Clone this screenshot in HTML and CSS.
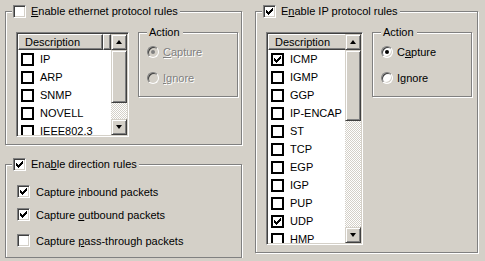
FILE: index.html
```html
<!DOCTYPE html>
<html lang="en">
<head>
    <meta charset="UTF-8">
    <title>Capture rules</title>
    <link rel="stylesheet" href="styles.css">
</head>
<body>
    <div class="dialog">
        <div class="left-col">
            <fieldset class="group group-eth">
                <legend><span class="chk"></span><span><u>E</u>nable ethernet protocol rules</span></legend>
                <div class="group-body">
                    <div class="listview lv-eth">
                        <div class="lv-main">
                            <div class="lv-header"><span class="lv-col">Description</span><span class="lv-col-rest"></span></div>
                            <div class="lv-rows">
                                <div class="lv-row"><span class="box"></span><span>IP</span></div>
                                <div class="lv-row"><span class="box"></span><span>ARP</span></div>
                                <div class="lv-row"><span class="box"></span><span>SNMP</span></div>
                                <div class="lv-row"><span class="box"></span><span>NOVELL</span></div>
                                <div class="lv-row"><span class="box"></span><span>IEEE802.3</span></div>
                            </div>
                        </div>
                        <div class="scrollbar">
                            <span class="sb-btn up"></span>
                            <span class="sb-thumb"></span>
                            <span class="sb-track"></span>
                            <span class="sb-btn down"></span>
                        </div>
                    </div>
                    <fieldset class="action disabled">
                        <legend>Action</legend>
                        <div class="radio-row"><span class="radio on"></span><span><u>C</u>apture</span></div>
                        <div class="radio-row"><span class="radio"></span><span><u>I</u>gnore</span></div>
                    </fieldset>
                </div>
            </fieldset>

            <fieldset class="group group-dir">
                <legend><span class="chk"><svg viewBox="0 0 13 13" width="13" height="13"><path d="M3 5h1v3H3zM4 6h1v3H4zM5 7h1v3H5zM6 6h1v3H6zM7 5h1v3H7zM8 4h1v3H8zM9 3h1v3H9z"/></svg></span><span>Ena<u>b</u>le direction rules</span></legend>
                <div class="dir-list">
                    <div class="dir-item"><span class="chk"><svg viewBox="0 0 13 13" width="13" height="13"><path d="M3 5h1v3H3zM4 6h1v3H4zM5 7h1v3H5zM6 6h1v3H6zM7 5h1v3H7zM8 4h1v3H8zM9 3h1v3H9z"/></svg></span><span>Capture <u>i</u>nbound packets</span></div>
                    <div class="dir-item"><span class="chk"><svg viewBox="0 0 13 13" width="13" height="13"><path d="M3 5h1v3H3zM4 6h1v3H4zM5 7h1v3H5zM6 6h1v3H6zM7 5h1v3H7zM8 4h1v3H8zM9 3h1v3H9z"/></svg></span><span>Capture <u>o</u>utbound packets</span></div>
                    <div class="dir-item"><span class="chk"></span><span>Capture <u>p</u>ass-through packets</span></div>
                </div>
            </fieldset>
        </div>

        <fieldset class="group group-ip">
            <legend><span class="chk"><svg viewBox="0 0 13 13" width="13" height="13"><path d="M3 5h1v3H3zM4 6h1v3H4zM5 7h1v3H5zM6 6h1v3H6zM7 5h1v3H7zM8 4h1v3H8zM9 3h1v3H9z"/></svg></span><span>E<u>n</u>able IP protocol rules</span></legend>
            <div class="group-body">
                <div class="listview lv-ip">
                    <div class="lv-main">
                        <div class="lv-header"><span class="lv-col">Description</span><span class="lv-col-rest"></span></div>
                        <div class="lv-rows">
                            <div class="lv-row"><span class="box"><svg viewBox="0 0 13 13" width="13" height="13"><path d="M3 5h1v3H3zM4 6h1v3H4zM5 7h1v3H5zM6 6h1v3H6zM7 5h1v3H7zM8 4h1v3H8zM9 3h1v3H9z"/></svg></span><span>ICMP</span></div>
                            <div class="lv-row"><span class="box"></span><span>IGMP</span></div>
                            <div class="lv-row"><span class="box"></span><span>GGP</span></div>
                            <div class="lv-row"><span class="box"></span><span>IP-ENCAP</span></div>
                            <div class="lv-row"><span class="box"></span><span>ST</span></div>
                            <div class="lv-row"><span class="box"></span><span>TCP</span></div>
                            <div class="lv-row"><span class="box"></span><span>EGP</span></div>
                            <div class="lv-row"><span class="box"></span><span>IGP</span></div>
                            <div class="lv-row"><span class="box"></span><span>PUP</span></div>
                            <div class="lv-row"><span class="box"><svg viewBox="0 0 13 13" width="13" height="13"><path d="M3 5h1v3H3zM4 6h1v3H4zM5 7h1v3H5zM6 6h1v3H6zM7 5h1v3H7zM8 4h1v3H8zM9 3h1v3H9z"/></svg></span><span>UDP</span></div>
                            <div class="lv-row"><span class="box"></span><span>HMP</span></div>
                        </div>
                    </div>
                    <div class="scrollbar">
                        <span class="sb-btn up"></span>
                        <span class="sb-thumb"></span>
                        <span class="sb-track"></span>
                        <span class="sb-btn down"></span>
                    </div>
                </div>
                <fieldset class="action">
                    <legend>Action</legend>
                    <div class="radio-row"><span class="radio on"></span><span>C<u>a</u>pture</span></div>
                    <div class="radio-row"><span class="radio"></span><span>I<u>g</u>nore</span></div>
                </fieldset>
            </div>
        </fieldset>
    </div>
</body>
</html>
```

FILE: styles.css
```css
body {
    margin: 0;
    background: #d4d0c8;
    font-family: "Liberation Sans", Arial, sans-serif;
    font-size: 11px;
    color: #000;
    overflow: hidden;
}
u {
    text-decoration-thickness: 1px;
    text-underline-offset: 1px;
}
.dialog {
    display: flex;
    align-items: flex-start;
    gap: 13px;
    padding: 5px 0 0 5px;
}
.left-col {
    display: flex;
    flex-direction: column;
    gap: 13px;
    width: 237px;
}

/* etched group boxes */
fieldset {
    margin: 0;
    padding: 0;
    min-width: 0;
    border: 1px solid #808080;
    box-shadow: 1px 1px 0 #fff, inset 1px 1px 0 #fff;
}
legend {
    display: flex;
    align-items: center;
    gap: 5px;
    height: 13px;
    line-height: 13px;
    padding: 0 2px 0 1px;
    margin-left: 6px;
    background: #d4d0c8;
}
.group {
    width: 237px;
    box-sizing: border-box;
}
.group-ip {
    width: 223px;
}
.group-body {
    display: flex;
    align-items: flex-start;
    gap: 9px;
    padding: 8px 0 7px 10px;
}

/* sunken check boxes */
.chk {
    width: 13px;
    height: 13px;
    box-sizing: border-box;
    background: #fff;
    border: 1px solid;
    border-color: #808080 #fff #fff #808080;
    box-shadow: inset 1px 1px 0 #404040, inset -1px -1px 0 #d4d0c8;
    flex: none;
    position: relative;
}
.chk svg {
    position: absolute;
    left: -1px;
    top: -1px;
}

/* list views */
.listview {
    display: flex;
    margin-top: 6px;
    background: #fff;
    border: 1px solid;
    border-color: #808080 #fff #fff #808080;
    box-shadow: inset 1px 1px 0 #404040, inset -1px -1px 0 #d4d0c8;
    padding: 1px;
    box-sizing: border-box;
}
.lv-eth {
    width: 113px;
    height: 105px;
}
.lv-ip {
    width: 97px;
    height: 213px;
}
.lv-main {
    flex: 1;
    overflow: hidden;
}
.lv-header {
    display: flex;
    height: 16px;
}
.lv-col, .lv-col-rest {
    box-sizing: border-box;
    background: #d4d0c8;
    border: 1px solid;
    border-color: #fff #404040 #404040 #fff;
    box-shadow: inset -1px -1px 0 #808080;
    line-height: 14px;
}
.lv-col {
    width: 85px;
    padding-left: 6px;
    flex: none;
}
.lv-col-rest {
    flex: 1;
}
.lv-row {
    display: flex;
    align-items: center;
    height: 18px;
    padding-left: 3px;
    gap: 6px;
    white-space: nowrap;
}
.box {
    width: 13px;
    height: 13px;
    box-sizing: border-box;
    border: 2px solid #000;
    background: #fff;
    flex: none;
    position: relative;
}
.box svg {
    position: absolute;
    left: -2px;
    top: -2px;
}

/* scroll bars */
.scrollbar {
    display: flex;
    flex-direction: column;
    width: 16px;
    flex: none;
}
.sb-btn, .sb-thumb {
    box-sizing: border-box;
    background: #d4d0c8;
    border: 1px solid;
    border-color: #d4d0c8 #404040 #404040 #d4d0c8;
    box-shadow: inset 1px 1px 0 #fff, inset -1px -1px 0 #808080;
    flex: none;
}
.sb-btn {
    height: 16px;
    position: relative;
}
.sb-btn::after {
    content: "";
    position: absolute;
    left: 4px;
    border-left: 3.5px solid transparent;
    border-right: 3.5px solid transparent;
}
.sb-btn.up::after {
    top: 5px;
    border-bottom: 4px solid #000;
}
.sb-btn.down::after {
    top: 5px;
    border-top: 4px solid #000;
}
.sb-track {
    flex: 1;
    background: repeating-conic-gradient(#fff 0 25%, #d4d0c8 0 50%) 0 0 / 2px 2px;
}
.lv-eth .sb-thumb {
    height: 53px;
}
.lv-ip .sb-thumb {
    height: 71px;
}

/* action boxes */
.action {
    width: 100px;
    height: 71px;
    box-sizing: border-box;
    padding: 6px 0 0 8px;
    display: flex;
    flex-direction: column;
    gap: 13px;
}
.action legend {
    padding: 0 3px 0 2px;
    margin-left: 0;
}
.radio-row {
    display: flex;
    align-items: center;
    gap: 4px;
    height: 13px;
}
.radio {
    width: 12px;
    height: 12px;
    box-sizing: border-box;
    border-radius: 50%;
    background: #fff;
    border: 1px solid;
    border-color: #808080 #fff #fff #808080;
    box-shadow: inset 1px 1px 0 #404040, inset -1px -1px 0 #d4d0c8;
    position: relative;
    flex: none;
}
.radio.on::after {
    content: "";
    position: absolute;
    left: 3px;
    top: 3px;
    width: 4px;
    height: 4px;
    border-radius: 50%;
    background: #000;
}
.disabled .radio-row {
    color: #808080;
    text-shadow: 1px 1px 0 #fff;
}
.disabled .radio {
    background: #d4d0c8;
}
.disabled .radio.on::after {
    background: #808080;
}

/* direction rules */
.dir-list {
    display: flex;
    flex-direction: column;
    padding: 14px 0 10px 11px;
}
.dir-item {
    display: flex;
    align-items: center;
    gap: 6px;
    height: 13px;
    margin-bottom: 10px;
}
.dir-item:last-child {
    margin-top: 3px;
    margin-bottom: 0;
}
```
